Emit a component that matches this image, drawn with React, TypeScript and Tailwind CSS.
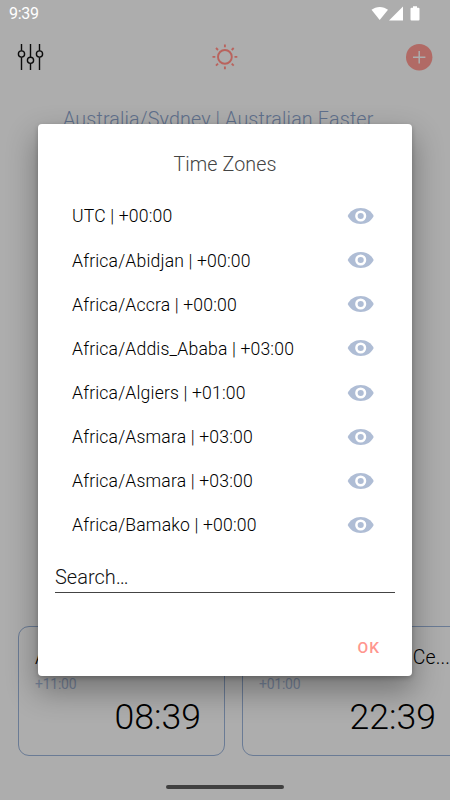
import React from "react";

const zones = [
  "UTC | +00:00",
  "Africa/Abidjan | +00:00",
  "Africa/Accra | +00:00",
  "Africa/Addis_Ababa | +03:00",
  "Africa/Algiers | +01:00",
  "Africa/Asmara | +03:00",
  "Africa/Asmara | +03:00",
  "Africa/Bamako | +00:00",
];

function StatusBar() {
  return (
    <div className="flex h-[27px] items-center pr-[30px] pl-[9px] text-white">
      <span className="mt-px text-[16px] leading-none tracking-[-0.3px]">9:39</span>
      <svg className="ml-auto" width="50" height="16" viewBox="0 0 50 16" fill="currentColor">
        <path d="M1.500 3.800C6 -0.100 13.500 -0.100 18 3.800L9.700 14Z" />
        <path d="M19 14.500L33 0.500V14.500Z" />
        <path d="M43 0.300h4v1.500h1.500a1 1 0 0 1 1 1v10.700a1 1 0 0 1-1 1h-7a1 1 0 0 1-1-1V2.800a1 1 0 0 1 1-1H43Z" />
      </svg>
    </div>
  );
}

function Toolbar() {
  return (
    <div className="flex h-[60px] items-center justify-between pr-[17px] pl-[17px]">
      <svg width="27" height="28" viewBox="0 0 27 28" fill="none" stroke="#0c0c0c" strokeWidth="1.4">
        <path d="M4.500 1v6.700M4.500 14.200V27M13.500 1v13M13.500 20.500V27M22.500 1v6.700M22.500 14.200V27" />
        <circle cx="4.500" cy="11" r="3.100" />
        <circle cx="13.500" cy="17.300" r="3.100" />
        <circle cx="22.500" cy="11" r="3.100" />
      </svg>
      <svg width="26" height="26" viewBox="0 0 26 26" fill="none" stroke="#b9635d" strokeWidth="1.9">
        <circle cx="12.900" cy="12.900" r="6.900" />
        <path d="M12.900 .5v2.800M12.900 22.500v2.800M.5 12.900h2.800M22.500 12.900h2.800M4 4l2 2M19.700 19.700l2 2M4 21.700l2-2M19.700 6l2-2" />
      </svg>
      <svg width="27" height="27" viewBox="0 0 27 27">
        <circle cx="13.200" cy="13.200" r="13.200" fill="#b16a65" />
        <path d="M13.200 7v12.400M7 13.200h12.400" stroke="#adadad" strokeWidth="1.500" />
      </svg>
    </div>
  );
}

function ClockCard({ name, suffix, offset, time, wide }: { name: string; suffix?: string; offset: string; time: string; wide?: boolean }) {
  return (
    <div
      className={`flex h-[130px] shrink-0 flex-col rounded-[11px] border border-[#6a7b95] pt-[19px] pl-[16px] ${
        wide ? "w-[230px] pr-[35px]" : "w-[207px] pr-[23px]"
      }`}
    >
      <div className="flex h-[24px] items-center text-[19.5px] leading-none font-light tracking-[0.1px] text-black">
        <span>{name}</span>
        {suffix && <span className="-mr-[14px] ml-auto">{suffix}</span>}
      </div>
      <div className="mt-[6px] text-[14px] leading-[17px] tracking-[-0.25px] text-[#77849a]">{offset}</div>
      <div className="mt-[3px] self-end text-[35.6px] leading-[42px] font-light text-black">{time}</div>
    </div>
  );
}

function Eye() {
  return (
    <svg width="28" height="18" viewBox="0 0 28 18">
      <path d="M.7 9C3 4 7.900 1 13.700 1s10.700 3 13 8c-2.300 5-7.200 8-13 8S3 14 .7 9Z" fill="#afbdd5" />
      <circle cx="13.700" cy="9" r="4.300" fill="#afbdd5" stroke="#fff" strokeWidth="2.500" />
    </svg>
  );
}

function ZoneDialog() {
  return (
    <div className="absolute top-[124px] left-[38px] flex h-[552px] w-[374px] flex-col rounded-[4px] bg-white shadow-[0_14px_30px_2px_rgba(0,0,0,0.32),0_2px_5px_rgba(0,0,0,0.22)]">
      <h2 className="mt-[29px] mb-[-1px] text-center text-[19.7px] leading-[24px] font-light tracking-[0.1px] text-[#444]">Time Zones</h2>
      <ul className="mt-[18px] pr-[37px] pl-[34px]">
        {zones.map((z, i) => (
          <li key={i} className="flex h-[44.15px] items-center justify-between text-[17.600px] font-light tracking-[0.16px] text-black">
            <span className="mt-px">{z}</span>
            <Eye />
          </li>
        ))}
      </ul>
      <div className="mx-[17px] h-[46px] border-b border-[#444] pt-[18px] text-[20px] leading-[24px] font-light text-[#111]">
        Search…
      </div>
      <div className="mt-[44px] mr-[32px] self-end text-[15.5px] leading-[22px] font-medium tracking-[1px] text-[#ff968e]">OK</div>
    </div>
  );
}

export default function App() {
  return (
    <div className="relative flex h-[800px] w-[450px] flex-col overflow-hidden bg-[#adadad] font-['Roboto',sans-serif]">
      <StatusBar />
      <Toolbar />
      <div className="mt-[21px] pl-[63px] text-[19.700px] leading-[24px] font-light tracking-[0.14px] whitespace-nowrap text-[#5f708c]">
        Australia/Sydney | Australian Easter
      </div>
      <div className="mt-auto flex gap-[17px] pl-[18px]">
        <ClockCard name="Australia/Sydney" offset="+11:00" time="08:39" />
        <ClockCard name="Europe" suffix="Ce..." offset="+01:00" time="22:39" wide />
      </div>
      <div className="mt-[29px] mb-[11px] ml-[166px] h-[4px] w-[118px] rounded-full bg-[#404040]" />
      <ZoneDialog />
    </div>
  );
}
